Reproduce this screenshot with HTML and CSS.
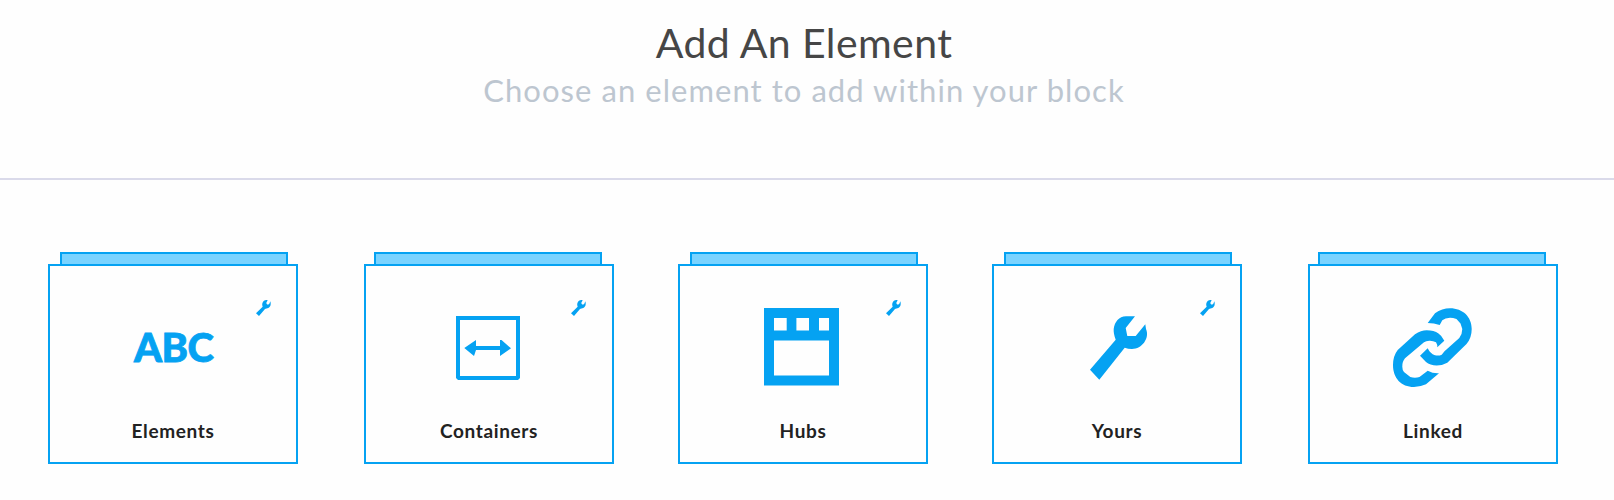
FILE: index.html
```html
<!DOCTYPE html>
<html lang="en">
<head>
    <meta charset="UTF-8">
    <meta name="viewport" content="width=device-width, initial-scale=1.0">
    <title>Add An Element</title>
    <link rel="stylesheet" href="styles.css">
</head>
<body>
    <!-- Shared wrench badge -->
    <svg class="symbols" width="0" height="0">
        <symbol id="wrench-small" viewBox="0 0 45 48">
            <path d="M35 1 L31 8 L32 12 L36 14 L40 11 L43 4 C46 14 43 21 37 24 C33 26 30 25 27 27 L9 48 L0 40 L20 20 C17 13 19 6 24 2 C27 0 32 -0.5 35 1 Z"/>
        </symbol>
    </svg>

    <!-- Header -->
    <header class="header">
        <h1 class="title">Add An Element</h1>
        <p class="subtitle">Choose an element to add within your block</p>
    </header>

    <!-- Element types -->
    <main class="cards">
        <div class="card">
            <div class="card-tab"></div>
            <div class="card-body">
                <svg class="badge"><use href="#wrench-small"/></svg>
                <div class="icon icon-text">ABC</div>
                <span class="label">Elements</span>
            </div>
        </div>

        <div class="card card-wide-gap">
            <div class="card-tab tab-near"></div>
            <div class="card-body">
                <svg class="badge badge-near"><use href="#wrench-small"/></svg>
                <svg class="icon" viewBox="0 0 80 80">
                    <path fill-rule="evenodd" d="M7 9 H71 V71 L69 73 H9 L7 71 Z M11 13 V69 H67 V13 Z"/>
                    <path d="M15.3 41 L27 33 V39 H51 V33 H52.5 L62 41.3 L51 49 V43 H27 L25 49 Z"/>
                </svg>
                <span class="label">Containers</span>
            </div>
        </div>

        <div class="card">
            <div class="card-tab"></div>
            <div class="card-body">
                <svg class="badge"><use href="#wrench-small"/></svg>
                <svg class="icon" viewBox="0 0 80 80">
                    <path fill-rule="evenodd" d="M1 1 H76 V78.5 H1 Z M11 11 V23.5 H23.7 V11 Z M33.4 11 V23.5 H46 V11 Z M56 11 V23.5 H66 V11 Z M11 33.4 V68.4 H66 V33.4 Z"/>
                </svg>
                <span class="label">Hubs</span>
            </div>
        </div>

        <div class="card">
            <div class="card-tab"></div>
            <div class="card-body">
                <svg class="badge"><use href="#wrench-small"/></svg>
                <svg class="icon" viewBox="0 0 80 80">
                    <path d="M58 9.3 L48.7 21 L50.3 29 H58.7 L68.3 17.3 L69 22 C73 31 65 42 55 42 Q51 42 47.7 40.7 L22.3 72.7 L13 62.7 L38.7 32.7 C37 28 36.5 25 36.7 22 C37.5 15 42 9.5 49 9.3 Z"/>
                </svg>
                <span class="label">Yours</span>
            </div>
        </div>

        <div class="card card-wide-gap">
            <div class="card-tab tab-near"></div>
            <div class="card-body">
                <svg class="icon" viewBox="0 0 80 80">
                    <path d="M34.7 16 L42 6.3 Q49 1.3 57 1.3 C70 1.3 78.7 10 78.7 22 Q78.7 31 73.5 37 L54.3 55.7 Q49 58.6 43.7 58.6 Q37 58.4 33 55 L27 48.7 L34.7 41.3 Q37 46.5 42 48.3 Q46 49 48.7 47.7 L51.5 44.3 L66.3 31 Q69.3 27 69.3 22 L67.5 16.5 L63.5 12 Q60 10.8 57 10.8 Q52 11 49.3 13.3 L46.7 18 Q41 16 34.7 16 Z"/>
                    <path d="M51.3 33.7 L44.3 40.3 Q44.5 37.5 43 35.3 Q40 33.5 36.3 33.7 Q33 34 31 35.3 L12 51.3 Q9 55 9.3 59.7 Q9.3 63 11 65 L17.3 70 Q22 71.3 26.5 70 L34.7 63.7 Q40 66.7 46 66.3 L33 77.3 Q27 80 21 80 C8 80 0 71 0 58 Q0 49 4.7 43 L22 27.3 Q28 23.3 33.7 23.3 Q41 23.3 45.5 26.5 Q49 28.8 51.3 33.7 Z"/>
                </svg>
                <span class="label">Linked</span>
            </div>
        </div>
    </main>
</body>
</html>
```
FILE: styles.css
```css
* {
    box-sizing: border-box;
}

body {
    margin: 0;
    font-family: Lato, sans-serif;
    background: #fefefe;
}

.symbols {
    display: block;
}

/* Header */
.header {
    height: 180px;
    padding-top: 18px;
    border-bottom: 2px solid #dadaea;
    text-align: center;
}

.title {
    margin: 0 0 0 -6px;
    font-size: 41px;
    font-weight: 400;
    line-height: 50px;
    letter-spacing: 0.4px;
    color: #464646;
}

.subtitle {
    margin: 3px 0 0 -6px;
    font-size: 31px;
    line-height: 39px;
    letter-spacing: 1.05px;
    color: #bdc6d0;
}

/* Cards */
.cards {
    display: flex;
    gap: 64px;
    padding: 72px 48px 0;
}

.card {
    flex: none;
    width: 250px;
}

.card-wide-gap {
    margin-left: 2px;
}

.card-tab {
    width: 228px;
    height: 12px;
    margin-left: 12px;
    border: 2px solid #05a2f2;
    border-bottom: none;
    background: #7ad3ff;
}

.tab-near {
    margin-left: 10px;
}

.card-body {
    position: relative;
    display: flex;
    flex-direction: column;
    align-items: center;
    height: 200px;
    padding-top: 41px;
    border: 2px solid #05a2f2;
    background: #fefefe;
}

.badge {
    position: absolute;
    top: 34px;
    right: 25px;
    width: 15px;
    height: 16px;
    fill: #05a2f2;
}

.badge-near {
    right: 26px;
}

.icon {
    width: 80px;
    height: 80px;
    overflow: visible;
    fill: #05a2f2;
}

.icon-text {
    padding-left: 1px;
    font-size: 40px;
    font-weight: 900;
    line-height: 81px;
    letter-spacing: -0.5px;
    -webkit-text-stroke: 0.8px #05a2f2;
    color: #05a2f2;
}

.label {
    margin-top: 32px;
    font-size: 19px;
    font-weight: 700;
    line-height: 24px;
    letter-spacing: 0.65px;
    color: #222;
}
```
